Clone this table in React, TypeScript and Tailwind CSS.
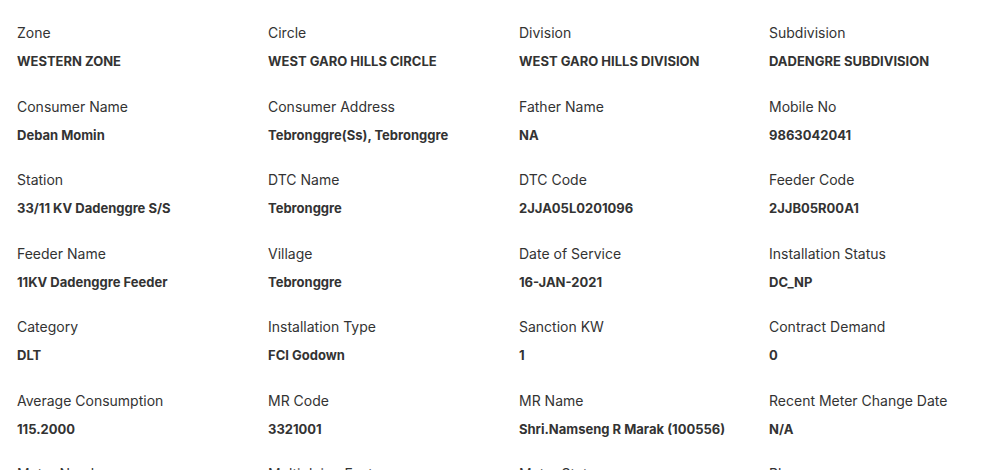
import React from 'react';

const fields: { label: string; value: string }[] = [
  { label: 'Zone', value: 'WESTERN ZONE' },
  { label: 'Circle', value: 'WEST GARO HILLS CIRCLE' },
  { label: 'Division', value: 'WEST GARO HILLS DIVISION' },
  { label: 'Subdivision', value: 'DADENGRE SUBDIVISION' },
  { label: 'Consumer Name', value: 'Deban Momin' },
  { label: 'Consumer Address', value: 'Tebronggre(Ss), Tebronggre' },
  { label: 'Father Name', value: 'NA' },
  { label: 'Mobile No', value: '9863042041' },
  { label: 'Station', value: '33/11 KV Dadenggre S/S' },
  { label: 'DTC Name', value: 'Tebronggre' },
  { label: 'DTC Code', value: '2JJA05L0201096' },
  { label: 'Feeder Code', value: '2JJB05R00A1' },
  { label: 'Feeder Name', value: '11KV Dadenggre Feeder' },
  { label: 'Village', value: 'Tebronggre' },
  { label: 'Date of Service', value: '16-JAN-2021' },
  { label: 'Installation Status', value: 'DC_NP' },
  { label: 'Category', value: 'DLT' },
  { label: 'Installation Type', value: 'FCI Godown' },
  { label: 'Sanction KW', value: '1' },
  { label: 'Contract Demand', value: '0' },
  { label: 'Average Consumption', value: '115.2000' },
  { label: 'MR Code', value: '3321001' },
  { label: 'MR Name', value: 'Shri.Namseng R Marak (100556)' },
  { label: 'Recent Meter Change Date', value: 'N/A' },
  { label: 'Meter Number', value: '—' },
  { label: 'Multiplying Factor', value: '1' },
  { label: 'Meter Status', value: '—' },
  { label: 'Phase', value: '—' },
];

export default function App() {
  return (
    <div
      className="h-[470px] w-[981px] overflow-hidden bg-white pl-[17px] pt-[23px]"
      style={{ fontFamily: 'Inter, "Noto Sans", sans-serif' }}
    >
      <div className="grid grid-cols-[251px_251px_250px_1fr] gap-y-[25.5px]">
        {fields.map((f) => (
          <div key={f.label} className="flex flex-col gap-2">
            <div className="text-[14px] leading-5 text-[#333333]">{f.label}</div>
            <div className="text-[13px] font-bold leading-5 text-[#333333]">{f.value}</div>
          </div>
        ))}
      </div>
    </div>
  );
}
